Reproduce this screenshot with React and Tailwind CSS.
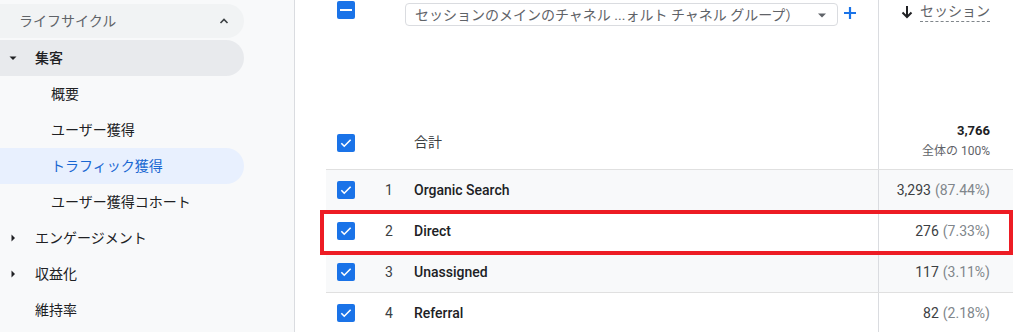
import React from "react";

const font = { fontFamily: 'Roboto, "Noto Sans CJK JP", "Noto Sans", sans-serif' };

function Check({ minus = false }) {
  return (
    <div className="w-[18px] h-[18px] rounded-[2px] bg-[#1a73e8] flex items-center justify-center shrink-0">
      {minus ? (
        <div className="w-[12px] h-[2px] bg-white" />
      ) : (
        <svg width="14" height="14" viewBox="0 0 24 24">
          <path d="M4 12.5l5 5L20 6.5" fill="none" stroke="white" strokeWidth="2.8" />
        </svg>
      )}
    </div>
  );
}

function CaretDown() {
  return (
    <svg width="10" height="10" viewBox="0 0 10 10" className="shrink-0">
      <path d="M1.5 3.5h7L5 7z" fill="#202124" />
    </svg>
  );
}
function CaretRight() {
  return (
    <svg width="10" height="10" viewBox="0 0 10 10" className="shrink-0">
      <path d="M3.5 1.5v7L7 5z" fill="#202124" />
    </svg>
  );
}

function Sidebar() {
  return (
    <div className="w-[295px] h-full bg-[#f8f9fa] border-r border-[#dadce0] shrink-0 pt-[4px] flex flex-col">
      <div className="w-[244px] h-[34px] rounded-r-full bg-[#f1f3f4] flex items-center pl-[19px] pr-[14px] justify-between">
        <span className="text-[14px] text-[#5f6368]">ライフサイクル</span>
        <svg width="12" height="12" viewBox="0 0 12 12">
          <path d="M2.5 8L6 4.5 9.5 8" fill="none" stroke="#3c4043" strokeWidth="1.6" />
        </svg>
      </div>
      <div className="w-[244px] h-[36px] mt-[2px] rounded-r-full bg-[#e8eaed] flex items-center pl-[8px]">
        <CaretDown />
        <span className="ml-[17px] text-[14px] font-medium text-[#202124]">集客</span>
      </div>
      <div className="h-[36px] flex items-center pl-[51px] text-[14px] text-[#202124]">概要</div>
      <div className="h-[36px] flex items-center pl-[51px] text-[14px] text-[#202124]">ユーザー獲得</div>
      <div className="w-[244px] h-[36px] rounded-r-full bg-[#e8f0fe] flex items-center pl-[51px] text-[14px] text-[#1967d2]">
        トラフィック獲得
      </div>
      <div className="h-[36px] flex items-center pl-[51px] text-[14px] text-[#202124]">ユーザー獲得コホート</div>
      <div className="h-[36px] flex items-center pl-[8px]">
        <CaretRight />
        <span className="ml-[17px] text-[14px] text-[#202124]">エンゲージメント</span>
      </div>
      <div className="h-[36px] flex items-center pl-[8px]">
        <CaretRight />
        <span className="ml-[17px] text-[14px] text-[#202124]">収益化</span>
      </div>
      <div className="h-[36px] flex items-center pl-[35px] text-[14px] text-[#202124]">維持率</div>
    </div>
  );
}

const rows = [
  { n: 1, label: "Organic Search", v: "3,293", p: "(87.44%)", bg: "bg-[#f8f9fa]" },
  { n: 2, label: "Direct", v: "276", p: "(7.33%)", bg: "bg-white" },
  { n: 3, label: "Unassigned", v: "117", p: "(3.11%)", bg: "bg-[#f8f9fa]" },
  { n: 4, label: "Referral", v: "82", p: "(2.18%)", bg: "bg-white" },
];

function Main() {
  return (
    <div className="relative flex-1 h-full bg-white pl-[31px] pr-[12px]">
      <div className="flex flex-col w-[687px]">
        {/* header */}
        <div className="flex h-[116px]">
          <div className="w-[552px] flex items-start">
            <div className="ml-[11px] mt-[1px]">
              <Check minus />
            </div>
            <div className="ml-[50px] mt-[3px] w-[433px] h-[23px] border border-[#dadce0] rounded-[4px] flex items-center pl-[9px] pr-[10px] justify-between">
              <span className="text-[14px] text-[#5f6368] whitespace-nowrap leading-none">
                セッションのメインのチャネル ...ォルト チャネル グループ）
              </span>
              <svg width="10" height="10" viewBox="0 0 10 10">
                <path d="M1 3.5h8L5 7.5z" fill="#5f6368" />
              </svg>
            </div>
            <svg width="16" height="16" viewBox="0 0 16 16" className="ml-[4px] mt-[5px]">
              <path d="M8 2v12M2 8h12" stroke="#1a73e8" strokeWidth="2.2" />
            </svg>
          </div>
          <div className="flex-1 border-l border-[#dadce0] flex justify-end items-start pr-[23px] pt-[1px]">
            <div className="flex items-center">
              <svg width="12" height="14" viewBox="0 0 12 14">
                <path d="M6 1v11M1.5 7.5L6 12l4.5-4.5" fill="none" stroke="#202124" strokeWidth="2" />
              </svg>
              <span className="ml-[7px] text-[14px] text-[#5f6368] leading-[20px] border-b border-dashed border-[#80868b]">
                セッション
              </span>
            </div>
          </div>
        </div>
        {/* total */}
        <div className="flex h-[54px] border-b border-[#e0e0e0]">
          <div className="w-[552px] flex items-center">
            <div className="ml-[11px]">
              <Check />
            </div>
            <span className="ml-[59px] text-[14px] text-[#3c4043]">合計</span>
          </div>
          <div className="flex-1 border-l border-[#dadce0] flex flex-col items-end justify-center pr-[23px] pb-[4px]">
            <span className="text-[13px] font-bold text-[#202124] leading-[18px]">3,766</span>
            <span className="text-[12px] text-[#5f6368] leading-[18px] mt-[2px]">全体の 100%</span>
          </div>
        </div>
        {rows.map((r) => (
          <div key={r.n} className={`flex h-[41px] border-b border-[#e0e0e0] ${r.bg}`}>
            <div className="w-[552px] flex items-center">
              <div className="ml-[11px]">
                <Check />
              </div>
              <span className="ml-[30px] w-[29px] text-[14px] text-[#3c4043]">{r.n}</span>
              <span className="text-[14px] font-medium text-[#202124]">{r.label}</span>
            </div>
            <div className="flex-1 border-l border-[#dadce0] flex items-center justify-end pr-[23px] text-[14px] whitespace-nowrap">
              <span className="text-[#3c4043]">{r.v}</span>
              <span className="ml-[4px] text-[#80868b]">{r.p}</span>
            </div>
          </div>
        ))}
      </div>
      <div className="absolute left-[25px] top-[210px] w-[693px] h-[45px] border-[4px] border-[#ed1c24]" />
    </div>
  );
}

export default function App() {
  return (
    <div className="w-[1025px] h-[332px] overflow-hidden flex bg-white" style={font}>
      <Sidebar />
      <Main />
    </div>
  );
}
